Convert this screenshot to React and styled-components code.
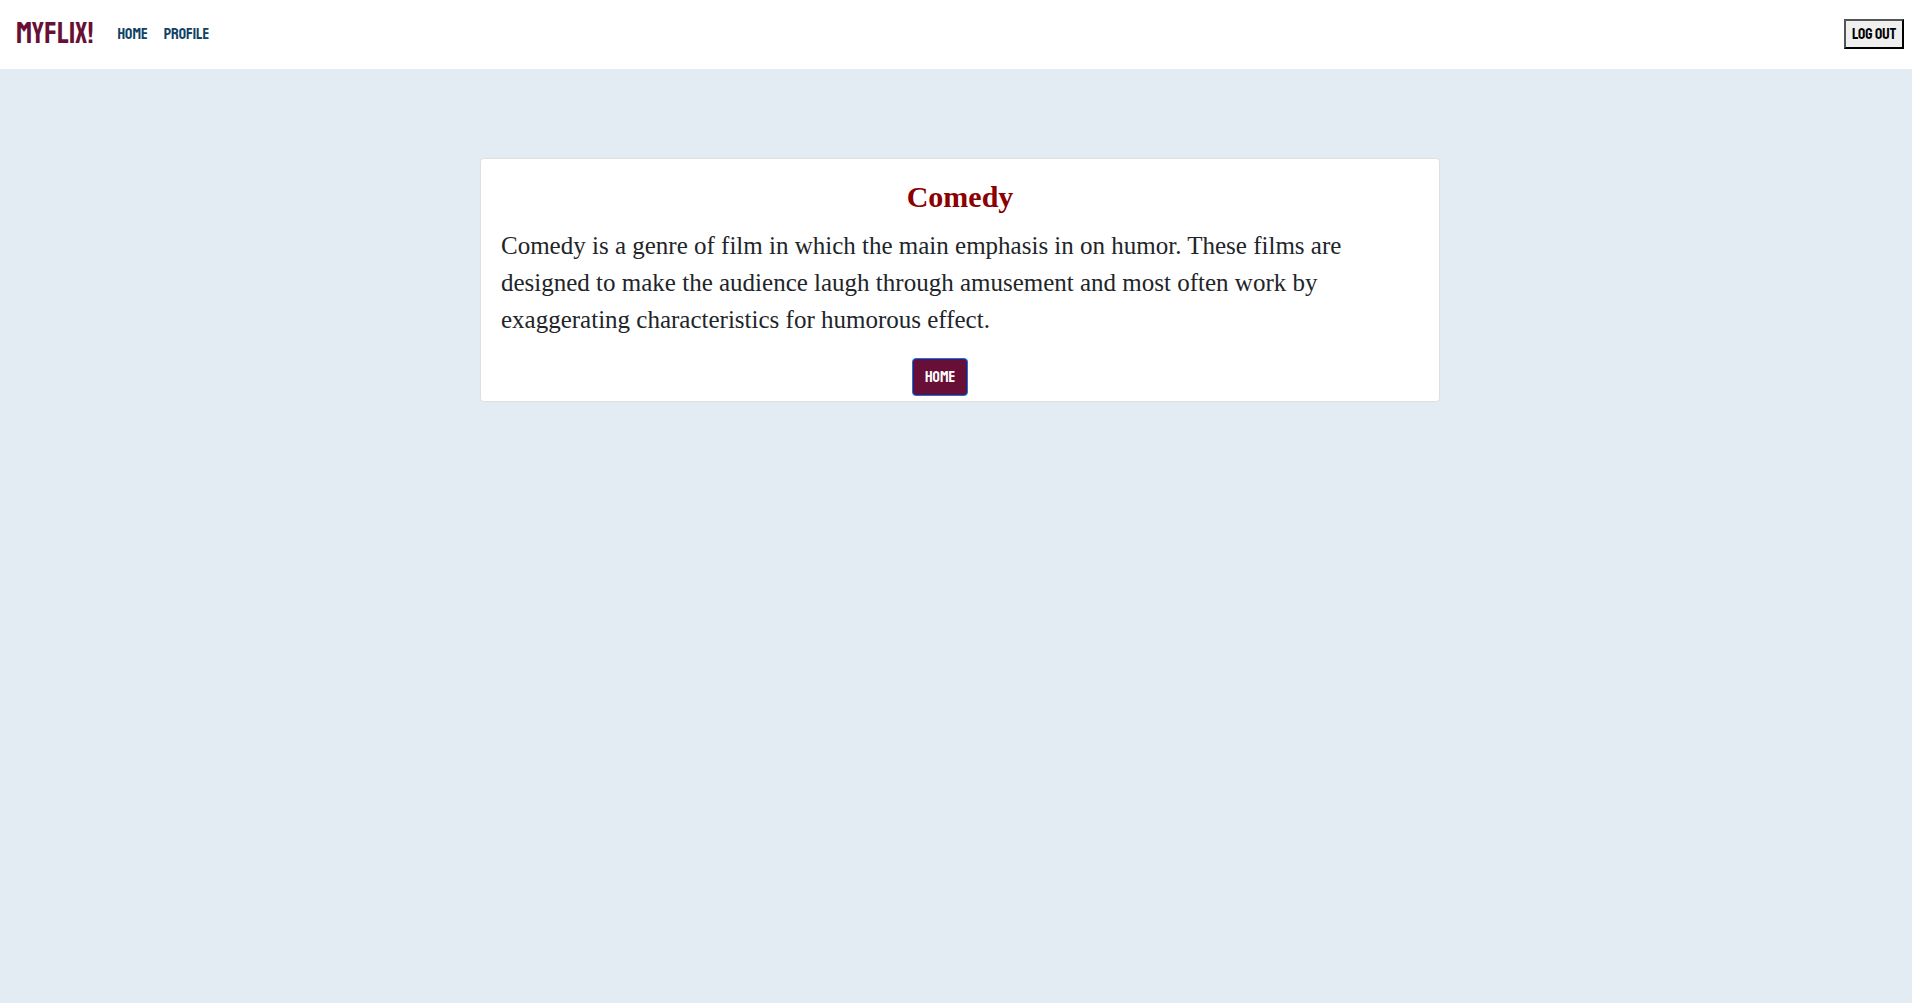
import React from "react";
import styled, { createGlobalStyle } from "styled-components";

const displayFont = `"Staatliches", "Liberation Sans Narrow", "Roboto Condensed", sans-serif`;

const GlobalStyle = createGlobalStyle`
  *, *::before, *::after { box-sizing: border-box; }
  body {
    margin: 0;
    background: #fff;
    color: #212529;
    font-family: "Liberation Serif", "Times New Roman", serif;
  }
`;

const Page = styled.div`
  display: flex;
  flex-direction: column;
  min-height: 100vh;
  background: #e3ebf3;
`;

const Navbar = styled.header`
  display: flex;
  align-items: center;
  justify-content: space-between;
  height: 69px;
  padding: 0 8px 2px 16px;
  background: #fff;
  font-family: ${displayFont};
`;

const NavGroup = styled.nav`
  display: flex;
  align-items: center;
  gap: 16px;
`;

const Brand = styled.a`
  margin-right: 8px;
  color: #670f36;
  font-size: 30px;
  font-weight: 400;
  line-height: 45px;
  text-decoration: none;
`;

const NavLink = styled.a`
  color: #0f4266;
  font-size: 16px;
  font-weight: 400;
  line-height: 24px;
  text-decoration: none;
`;

const LogOutButton = styled.button`
  width: 60px;
  height: 30px;
  padding: 0;
  border: 2px outset #000;
  background: #efefef;
  color: #000;
  font-family: inherit;
  font-size: 16px;
  font-weight: 400;
  white-space: nowrap;
`;

const Main = styled.main`
  flex: 1;
  padding: 89px 0 0 8px;
`;

const Card = styled.article`
  width: 100%;
  max-width: 960px;
  margin: 0 auto;
  border: 1px solid #dfdfdf;
  border-radius: 4px;
  background: #fff;
`;

const CardBody = styled.div`
  padding: 20px;
`;

const Title = styled.h1`
  margin: 0 0 12px;
  color: #8b0000;
  font-size: 30px;
  font-weight: 700;
  line-height: 36px;
  text-align: center;
`;

const Description = styled.p`
  margin: 0;
  font-size: 25px;
  line-height: 37px;
`;

const HomeButton = styled.button`
  display: block;
  width: 56px;
  height: 38px;
  margin: 0 0 5px 45%;
  padding: 0;
  border: 1px solid #007bff;
  border-radius: 4px;
  background: #670f36;
  color: #fff;
  font-family: ${displayFont};
  font-size: 16px;
  font-weight: 400;
`;

export default function App() {
  return (
    <Page>
      <GlobalStyle />
      <Navbar>
        <NavGroup>
          <Brand href="#">MYFLIX!</Brand>
          <NavLink href="#home">HOME</NavLink>
          <NavLink href="#profile">PROFILE</NavLink>
        </NavGroup>
        <LogOutButton type="button">LOG OUT</LogOutButton>
      </Navbar>
      <Main>
        <Card>
          <CardBody>
            <Title>Comedy</Title>
            <Description>
              Comedy is a genre of film in which the main emphasis in on humor. These films are
              designed to make the audience laugh through amusement and most often work by
              exaggerating characteristics for humorous effect.
            </Description>
          </CardBody>
          <HomeButton type="button">HOME</HomeButton>
        </Card>
      </Main>
    </Page>
  );
}
